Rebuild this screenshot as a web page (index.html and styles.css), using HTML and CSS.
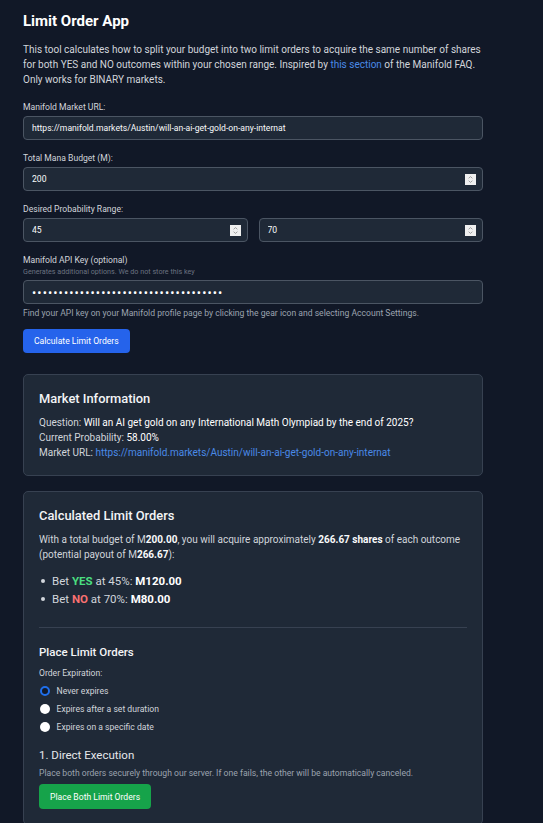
FILE: index.html
```html
<!DOCTYPE html>
<html lang="en">
<head>
<meta charset="utf-8">
<title>Limit Order App</title>
<link rel="stylesheet" href="styles.css">
</head>
<body>
<main class="container">
  <h1 class="title">Limit Order App</h1>
  <p class="intro">This tool calculates how to split your budget into two limit orders to acquire the same number of shares for both YES and NO outcomes within your chosen range. Inspired by <a href="#" class="link">this section</a> of the Manifold FAQ. Only works for BINARY markets.</p>

  <form class="form">
    <div class="field">
      <label class="label">Manifold Market URL:</label>
      <div class="input-box"><input class="input" type="text" value="https://manifold.markets/Austin/will-an-ai-get-gold-on-any-internat"></div>
    </div>

    <div class="field">
      <label class="label">Total Mana Budget (M):</label>
      <div class="input-box">
        <input class="input" type="text" value="200">
        <svg class="spin" width="11" height="11" viewBox="0 0 11 11"><rect width="11" height="11" fill="#efefef"/><path d="M3.6 4.3 L5.5 2.6 L7.4 4.3" stroke="#8d8d8d" stroke-width="0.8" fill="none"/><path d="M3.6 6.7 L5.5 8.4 L7.4 6.7" stroke="#8d8d8d" stroke-width="0.8" fill="none"/></svg>
      </div>
    </div>

    <div class="field">
      <label class="label">Desired Probability Range:</label>
      <div class="range">
        <div class="input-box">
          <input class="input" type="text" value="45">
          <svg class="spin" width="11" height="11" viewBox="0 0 11 11"><rect width="11" height="11" fill="#efefef"/><path d="M3.6 4.3 L5.5 2.6 L7.4 4.3" stroke="#8d8d8d" stroke-width="0.8" fill="none"/><path d="M3.6 6.7 L5.5 8.4 L7.4 6.7" stroke="#8d8d8d" stroke-width="0.8" fill="none"/></svg>
        </div>
        <div class="input-box">
          <input class="input" type="text" value="70">
          <svg class="spin" width="11" height="11" viewBox="0 0 11 11"><rect width="11" height="11" fill="#efefef"/><path d="M3.6 4.3 L5.5 2.6 L7.4 4.3" stroke="#8d8d8d" stroke-width="0.8" fill="none"/><path d="M3.6 6.7 L5.5 8.4 L7.4 6.7" stroke="#8d8d8d" stroke-width="0.8" fill="none"/></svg>
        </div>
      </div>
    </div>

    <div class="field field-last">
      <label class="label label-tight">Manifold API Key (optional)</label>
      <p class="hint">Generates additional options. We do not store this key</p>
      <div class="input-box"><input class="input password" type="password" value="000000000000000000000000000000000000"></div>
      <p class="help">Find your API key on your Manifold profile page by clicking the gear icon and selecting Account Settings.</p>
    </div>

    <button type="button" class="btn btn-blue">Calculate Limit Orders</button>
  </form>

  <section class="card market">
    <h2 class="card-title">Market Information</h2>
    <p class="info">Question: <span class="value">Will an AI get gold on any International Math Olympiad by the end of 2025?</span></p>
    <p class="info">Current Probability: <span class="value">58.00%</span></p>
    <p class="info">Market URL: <a href="#" class="link">https://manifold.markets/Austin/will-an-ai-get-gold-on-any-internat</a></p>
  </section>

  <section class="card calc">
    <h2 class="card-title">Calculated Limit Orders</h2>
    <p class="calc-text">With a total budget of M<strong>200.00</strong>, you will acquire approximately <strong>266.67 shares</strong> of each outcome (potential payout of M<strong>266.67</strong>):</p>
    <ul class="bets">
      <li class="bet"><span>Bet <b class="yes">YES</b> at 45%: <strong>M120.00</strong></span></li>
      <li class="bet"><span>Bet <b class="no">NO</b> at 70%: <strong>M80.00</strong></span></li>
    </ul>
    <hr class="divider">
    <h3 class="sub-title">Place Limit Orders</h3>
    <p class="exp-label">Order Expiration:</p>
    <div class="radios">
      <div class="radio-row"><span class="radio checked"></span><span>Never expires</span></div>
      <div class="radio-row"><span class="radio"></span><span>Expires after a set duration</span></div>
      <div class="radio-row"><span class="radio"></span><span>Expires on a specific date</span></div>
    </div>
    <h4 class="step">1. Direct Execution</h4>
    <p class="step-desc">Place both orders securely through our server. If one fails, the other will be automatically canceled.</p>
    <button type="button" class="btn btn-green">Place Both Limit Orders</button>
  </section>
</main>
</body>
</html>
```

FILE: styles.css
```css
* {
  box-sizing: border-box;
  margin: 0;
  padding: 0;
}

html,
body {
  overflow: hidden;
}

body {
  background: #111827;
  color: #d1d5db;
  font-family: Roboto, "Liberation Sans", Arial, sans-serif;
}

.container {
  width: 460px;
  margin-left: 23px;
  padding-top: 11px;
}

.title {
  font-size: 15px;
  line-height: 21px;
  font-weight: 700;
  color: #ffffff;
  margin-bottom: 10px;
}

.intro {
  font-size: 10px;
  line-height: 15px;
  color: #d1d5db;
}

.link {
  color: #4a8ae8;
  text-decoration: none;
}

.form {
  margin-top: 14px;
}

.field {
  margin-bottom: 12px;
}

.field-last {
  margin-bottom: 0;
}

.label {
  display: block;
  font-size: 8.6px;
  line-height: 12px;
  color: #d1d5db;
  margin-bottom: 3px;
}

.label-tight {
  margin-bottom: 1px;
}

.hint {
  font-size: 7.2px;
  line-height: 10px;
  color: #6b7280;
  margin-bottom: 3px;
}

.help {
  font-size: 8.6px;
  line-height: 12px;
  color: #9ca3af;
  margin-top: 3px;
}

.input-box {
  display: flex;
  align-items: center;
  height: 24px;
  background: #1f2937;
  border: 1px solid #4b5563;
  border-radius: 4px;
  padding: 0 6px 0 8px;
}

.input {
  flex: 1;
  min-width: 0;
  background: transparent;
  border: 0;
  outline: 0;
  color: #f9fafb;
  font-family: inherit;
  font-size: 8.6px;
}

.password {
  font-size: 12.5px;
  letter-spacing: 1.1px;
  color: #ffffff;
}

.spin {
  flex: none;
  display: block;
}

.range {
  display: grid;
  grid-template-columns: 1fr 1fr;
  gap: 11px;
}

.btn {
  display: block;
  height: 24px;
  padding: 0 11px;
  border: 0;
  border-radius: 4px;
  font-family: inherit;
  font-size: 8.6px;
  color: #ffffff;
}

.btn-blue {
  margin-top: 10px;
  background: #2563eb;
}

.btn-green {
  margin-top: 5px;
  height: 25px;
  background: #16a34a;
}

.card {
  background: #1f2937;
  border: 1px solid #374151;
  border-radius: 5px;
  padding: 15px;
}

.market {
  margin-top: 21px;
}

.calc {
  margin-top: 15px;
}

.card-title {
  font-size: 12.9px;
  line-height: 17px;
  font-weight: 500;
  color: #f3f4f6;
  margin-bottom: 8px;
}

.info {
  font-size: 10px;
  line-height: 15px;
  color: #d1d5db;
}

.value {
  color: #ffffff;
  font-weight: 400;
}

.calc-text {
  font-size: 10px;
  line-height: 15px;
  color: #d1d5db;
}

.calc-text strong {
  color: #f9fafb;
  font-weight: 700;
}

.bets {
  list-style: none;
  margin-top: 10px;
}

.bet {
  display: flex;
  align-items: center;
  font-size: 11.5px;
  line-height: 18px;
  color: #d1d5db;
}

.bet::before {
  content: "";
  flex: none;
  width: 4px;
  height: 4px;
  border-radius: 50%;
  background: #d1d5db;
  margin: 0 7px 0 2px;
}

.bet strong {
  color: #ffffff;
  font-weight: 700;
}

.yes {
  color: #4ade80;
}

.no {
  color: #f87171;
}

.divider {
  border: 0;
  border-top: 1px solid #374151;
  height: 0;
  margin-top: 19px;
}

.sub-title {
  font-size: 11.5px;
  line-height: 18px;
  font-weight: 500;
  color: #f3f4f6;
  margin-top: 15px;
}

.exp-label {
  font-size: 8.6px;
  line-height: 12px;
  color: #d1d5db;
  margin-top: 6px;
}

.radios {
  margin-top: 3px;
  display: flex;
  flex-direction: column;
}

.radio-row {
  display: flex;
  align-items: center;
  gap: 7px;
  height: 18px;
  font-size: 8.6px;
  color: #d1d5db;
}

.radio {
  flex: none;
  width: 10px;
  height: 10px;
  margin-left: 0.5px;
  border-radius: 50%;
  background: #ffffff;
}

.radio.checked {
  background: #111827;
  border: 2px solid #1f6feb;
}

.step {
  font-size: 11.5px;
  line-height: 18px;
  font-weight: 400;
  color: #e5e7eb;
  margin-top: 10px;
}

.step-desc {
  font-size: 8.6px;
  line-height: 12px;
  color: #9ca3af;
  margin-top: 3px;
}
```
